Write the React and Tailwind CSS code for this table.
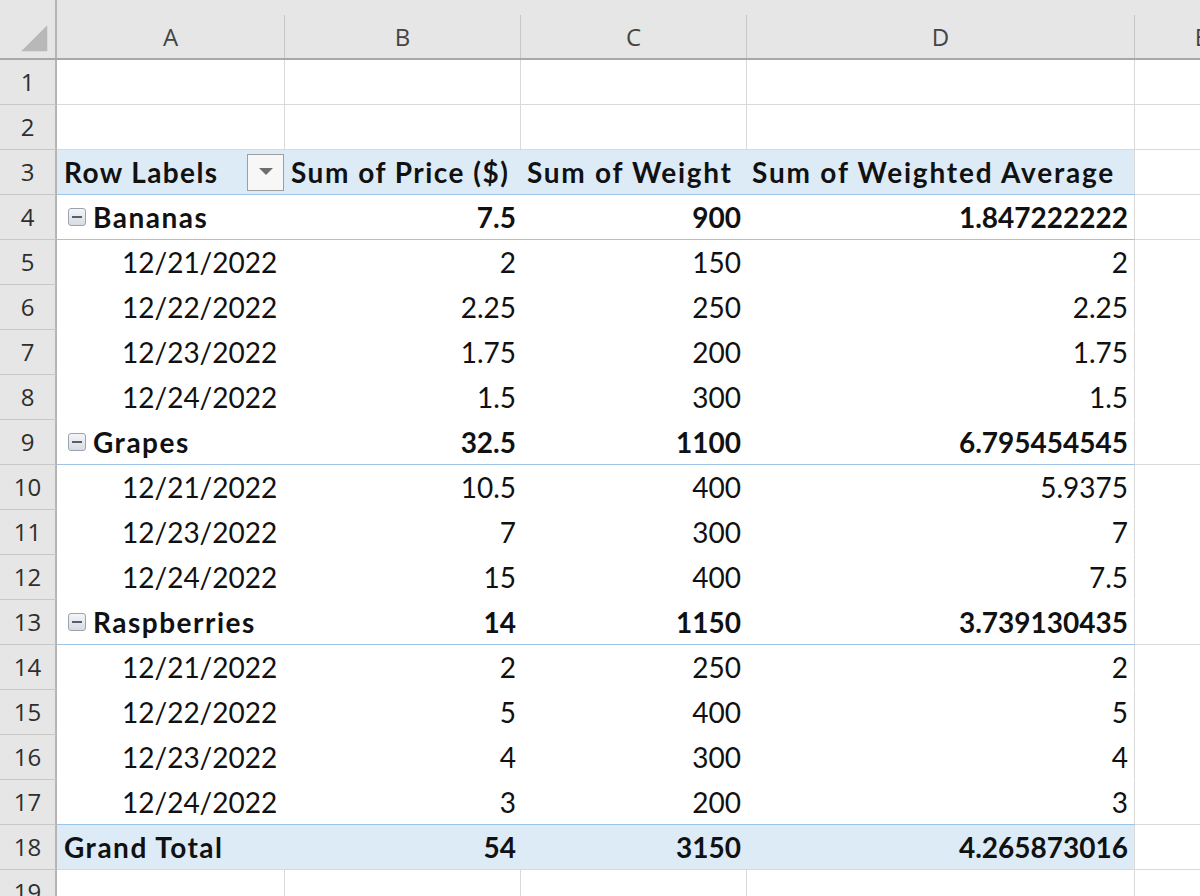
import React from "react";

const cols = [
  { key: "A", w: "w-[228px]" },
  { key: "B", w: "w-[236px]" },
  { key: "C", w: "w-[226px]" },
  { key: "D", w: "w-[388px]" },
];

const rows = [
  { n: 1, type: "blank" },
  { n: 2, type: "blank" },
  { n: 3, type: "header" },
  { n: 4, type: "group", label: "Bananas", b: "7.5", c: "900", d: "1.847222222" },
  { n: 5, type: "date", label: "12/21/2022", b: "2", c: "150", d: "2" },
  { n: 6, type: "date", label: "12/22/2022", b: "2.25", c: "250", d: "2.25" },
  { n: 7, type: "date", label: "12/23/2022", b: "1.75", c: "200", d: "1.75" },
  { n: 8, type: "date", label: "12/24/2022", b: "1.5", c: "300", d: "1.5" },
  { n: 9, type: "group", label: "Grapes", b: "32.5", c: "1100", d: "6.795454545" },
  { n: 10, type: "date", label: "12/21/2022", b: "10.5", c: "400", d: "5.9375" },
  { n: 11, type: "date", label: "12/23/2022", b: "7", c: "300", d: "7" },
  { n: 12, type: "date", label: "12/24/2022", b: "15", c: "400", d: "7.5" },
  { n: 13, type: "group", label: "Raspberries", b: "14", c: "1150", d: "3.739130435" },
  { n: 14, type: "date", label: "12/21/2022", b: "2", c: "250", d: "2" },
  { n: 15, type: "date", label: "12/22/2022", b: "5", c: "400", d: "5" },
  { n: 16, type: "date", label: "12/23/2022", b: "4", c: "300", d: "4" },
  { n: 17, type: "date", label: "12/24/2022", b: "3", c: "200", d: "3", last: true },
  { n: 18, type: "total", label: "Grand Total", b: "54", c: "3150", d: "4.265873016" },
  { n: 19, type: "blank" },
];

function Corner() {
  return (
    <div className="w-[57px] h-full border-r-2 border-[#b4b4b4] flex items-end justify-start">
      <svg width="57" height="58" viewBox="0 0 57 58">
        <polygon points="22,52 49,25 49,52" fill="#b8b8b8" />
      </svg>
    </div>
  );
}

function RowNum({ n }) {
  return (
    <div className="w-[57px] shrink-0 h-full bg-[#e6e6e6] border-r-2 border-b border-r-[#b4b4b4] border-b-[#c8c8c8] flex items-center justify-center text-[24px] text-[#2e2e2e]" style={{ fontFamily: '"Open Sans", sans-serif' }}>
      {n}
    </div>
  );
}

function DropButton() {
  return (
    <div className="w-[37px] h-[37px] border border-[#9e9e9e] bg-[#f7f7f7] flex items-center justify-center mr-[1px] tracking-normal">
      <svg width="14" height="8" viewBox="0 0 14 8">
        <polygon points="0,0 14,0 7,7" fill="#6e6e6e" />
      </svg>
    </div>
  );
}

function Collapse() {
  return (
    <div className="w-[18px] h-[18px] rounded-[3px] border border-[#9aa3ae] bg-gradient-to-b from-[#f4f5f7] to-[#d7dce3] flex items-center justify-center mr-[7px]">
      <div className="w-[10px] h-[2px] bg-[#55606c]" />
    </div>
  );
}

function BlankRow({ n }) {
  return (
    <div className="flex h-[45px]">
      <RowNum n={n} />
      {cols.map((c) => (
        <div key={c.key} className={`${c.w} shrink-0 h-full border-r border-b border-[#d9d9d9]`} />
      ))}
      <div className="flex-1 h-full border-b border-[#d9d9d9]" />
    </div>
  );
}

function PivotRow({ r }) {
  const bold = r.type !== "date";
  const blue = r.type === "header" || r.type === "total";
  const blueLine = r.type === "header" || r.type === "group" || r.last;
  const rowCls = `${blue ? "bg-[#ddebf7]" : "bg-white"} ${blueLine ? "border-b border-[#9dc3e6]" : r.type === "total" ? "border-b border-[#d9d9d9]" : "border-b border-transparent"}`;
  const weight = bold ? "font-bold" : "font-normal";
  const labelTrack = bold ? "tracking-[1.5px]" : "";

  return (
    <div className="flex h-[45px]">
      <RowNum n={r.n} />
      <div className={`flex h-full ${rowCls} border-r border-r-[#d9d9d9] text-[28px] text-[#111] ${weight}`} style={{ fontFamily: 'Lato, "Liberation Sans", sans-serif' }}>
        {r.type === "header" ? (
          <>
            <div className="w-[228px] flex items-center justify-between pl-[7px]">
              <span className="tracking-[1.4px]">Row Labels</span>
              <DropButton />
            </div>
            <div className="w-[236px] flex items-center pl-[6px] whitespace-nowrap tracking-[1.5px]">Sum of Price ($)</div>
            <div className="w-[226px] flex items-center pl-[6px] whitespace-nowrap tracking-[1.7px]">Sum of Weight</div>
            <div className="w-[387px] flex items-center pl-[5px] whitespace-nowrap tracking-[1.8px]">Sum of Weighted Average</div>
          </>
        ) : (
          <>
            <div
              className={`w-[228px] flex items-center whitespace-nowrap ${
                r.type === "group" ? "pl-[11px]" : r.type === "date" ? "pl-[65px]" : "pl-[7px]"
              }`}
            >
              {r.type === "group" && <Collapse />}
              <span className={labelTrack}>{r.label}</span>
            </div>
            <div className="w-[236px] flex items-center justify-end pr-[5px]">{r.b}</div>
            <div className="w-[226px] flex items-center justify-end pr-[6px]">{r.c}</div>
            <div className="w-[387px] flex items-center justify-end pr-[6px]">{r.d}</div>
          </>
        )}
      </div>
      <div className={`flex-1 h-full ${r.type === "date" && !r.last ? "" : "border-b border-[#d9d9d9]"}`} />
    </div>
  );
}

export default function App() {
  return (
    <div className="w-[1200px] h-[896px] overflow-hidden bg-white">
      {/* column header */}
      <div className="flex h-[60px] bg-[#e6e6e6] border-b-2 border-[#a8a8a8]">
        <Corner />
        <div className="flex pt-[15px]">
          {[...cols, { key: "E", w: "w-[134px]" }].map((c) => (
            <div
              key={c.key}
              className={`${c.w} shrink-0 h-full border-r border-[#c6c6c6] flex items-center justify-center text-[24px] text-[#444]`}
              style={{ fontFamily: '"Open Sans", sans-serif' }}
            >
              {c.key}
            </div>
          ))}
        </div>
      </div>
      {rows.map((r) =>
        r.type === "blank" ? <BlankRow key={r.n} n={r.n} /> : <PivotRow key={r.n} r={r} />
      )}
    </div>
  );
}
